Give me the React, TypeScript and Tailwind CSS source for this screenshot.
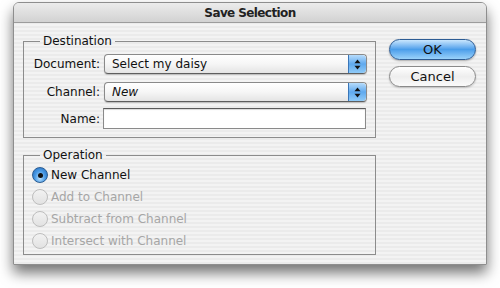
const font = "font-['DejaVu_Sans',sans-serif]";

function PopupArrows() {
  return (
    <div className="w-[18px] h-full rounded-r-[4px] border-l border-[#3a76b8] bg-linear-to-b from-[#b7dcfb] via-[#5fa9ee] to-[#8fcaf7] flex items-center justify-center">
      <svg width="7" height="11" viewBox="0 0 7 11">
        <path d="M3.5 0.5 L6.5 4.2 L0.5 4.2 Z" fill="#111" />
        <path d="M3.5 10.5 L6.5 6.8 L0.5 6.8 Z" fill="#111" />
      </svg>
    </div>
  );
}

function Popup({ value, italic }: { value: string; italic?: boolean }) {
  return (
    <div className="w-[263px] h-[20px] flex rounded-[4px] border border-[#8a8a8a] border-b-[#5e5e5e] bg-linear-to-b from-white via-[#f6f6f6] to-[#e4e4e4] shadow-[0_1px_1px_rgba(0,0,0,0.2)]">
      <div className={`flex-1 pl-[7px] leading-[18px] text-[12px] text-[#111] ${italic ? 'italic' : ''}`}>{value}</div>
      <PopupArrows />
    </div>
  );
}

function Radio({ label, checked }: { label: string; checked?: boolean }) {
  return (
    <div className="h-[22px] flex items-center gap-[3px]">
      {checked ? (
        <div className="w-[16px] h-[16px] rounded-full border border-[#2b5d93] bg-radial-[at_50%_70%] from-[#bfe4ff] via-[#4a9be6] to-[#1d63b4] flex items-center justify-center">
          <div className="w-[5px] h-[5px] rounded-full bg-[#111]" />
        </div>
      ) : (
        <div className="w-[16px] h-[16px] rounded-full border border-[#bdbdbd] bg-linear-to-b from-[#f2f2f2] to-[#e2e2e2]" />
      )}
      <span className={`text-[12px] leading-none ${checked ? 'text-[#111]' : 'text-[#a6a6a6]'}`}>{label}</span>
    </div>
  );
}

export default function App() {
  return (
    <div className={`w-[500px] h-[288px] bg-white pl-[13px] pt-[2px] ${font}`}>
      <div className="w-[474px] h-[263px] flex flex-col rounded-t-[6px] border border-[#8e8e8e] overflow-hidden shadow-[0_8px_14px_rgba(0,0,0,0.55)] bg-[image:repeating-linear-gradient(0deg,#ebebeb_0px,#ebebeb_2px,#f3f3f3_2px,#f3f3f3_4px)]">

        {/* Title bar */}
        <div className="h-[20px] shrink-0 flex items-center justify-center border-b border-[#9c9c9c] bg-linear-to-b from-[#ececec] to-[#d2d2d2]">
          <span className="text-[12px] font-bold tracking-[-0.6px] text-[#222]">Save Selection</span>
        </div>

        <div className="flex">
          {/* Left column */}
          <div className="ml-[9px] mt-[10px] w-[353px] flex flex-col gap-[9px]">
            <fieldset className="border border-[#8c8c8c] px-0 pt-[5px] pb-[8px]">
              <legend className="ml-[16px] px-[3px] leading-[16px] text-[12px] text-[#111]">Destination</legend>
              <div className="grid grid-cols-[76px_auto] gap-x-[4px] items-center">
                <span className="text-right text-[12px] text-[#111]">Document:</span>
                <Popup value="Select my daisy" />
                <div className="h-[8px] col-span-2" />
                <span className="text-right text-[12px] text-[#111]">Channel:</span>
                <Popup value="New" italic />
                <div className="h-[6px] col-span-2" />
                <span className="text-right text-[12px] text-[#111]">Name:</span>
                <div className="w-[263px] h-[21px] -ml-[1px] bg-white border border-[#8a8a8a] border-t-[#5a5a5a] shadow-[inset_0_1px_1px_rgba(0,0,0,0.15)]" />
              </div>
            </fieldset>

            <fieldset className="border border-[#8c8c8c] pl-[8px] pt-[1px] pb-[2px]">
              <legend className="ml-[8px] px-[3px] leading-[16px] text-[12px] text-[#111]">Operation</legend>
              <Radio label="New Channel" checked />
              <Radio label="Add to Channel" />
              <Radio label="Subtract from Channel" />
              <Radio label="Intersect with Channel" />
            </fieldset>
          </div>

          {/* Buttons */}
          <div className="ml-[13px] mt-[16px] w-[87px] flex flex-col gap-[6px]">
            <button className="h-[21px] rounded-full border border-[#2d5c94] bg-linear-to-b from-[#c9e6fd] via-[#4b9eea] to-[#9ad2fa] text-[13px] leading-none text-[#111] shadow-[0_1px_2px_rgba(0,0,0,0.3)]">
              OK
            </button>
            <button className="h-[21px] rounded-full border border-[#8a8a8a] bg-linear-to-b from-white via-[#eeeeee] to-[#fafafa] text-[13px] leading-none text-[#111] shadow-[0_1px_2px_rgba(0,0,0,0.2)]">
              Cancel
            </button>
          </div>
        </div>
      </div>
    </div>
  );
}
